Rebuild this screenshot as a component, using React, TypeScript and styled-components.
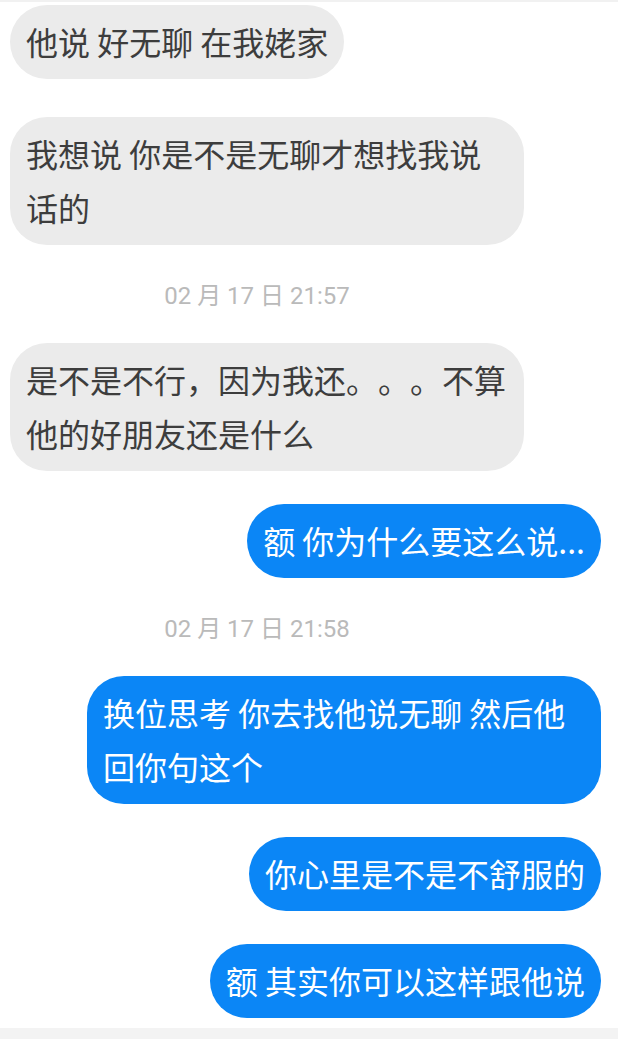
import React from "react";
import styled, { createGlobalStyle } from "styled-components";

const GlobalStyle = createGlobalStyle`
  html, body {
    margin: 0;
    padding: 0;
    background: #ffffff;
  }
  body {
    font-family: "Noto Sans CJK SC", "Noto Sans", sans-serif;
    text-spacing-trim: space-all;
  }
`;

const Screen = styled.div`
  width: 618px;
  height: 1039px;
  display: flex;
  flex-direction: column;
  overflow: hidden;
  background: #ffffff;
`;

const TopEdge = styled.div`
  height: 2px;
  flex-shrink: 0;
  background: #f1f1f1;
`;

const MessageList = styled.div`
  display: flex;
  flex-direction: column;
  padding-top: 3px;
  flex: 1;
`;

const BottomBar = styled.div`
  height: 11px;
  flex-shrink: 0;
  background: #f3f3f3;
`;

const Bubble = styled.div<{ $mine?: boolean; $space?: number }>`
  box-sizing: border-box;
  max-width: 514px;
  margin-top: ${(p) => p.$space ?? 0}px;
  padding: 9px 16px 11px;
  border-radius: 37px;
  font-size: 32px;
  line-height: 54px;
  white-space: pre-wrap;
  word-break: break-all;
  text-spacing-trim: space-all;
  align-self: ${(p) => (p.$mine ? "flex-end" : "flex-start")};
  margin-left: ${(p) => (p.$mine ? "0" : "10px")};
  margin-right: ${(p) => (p.$mine ? "17px" : "0")};
  background: ${(p) => (p.$mine ? "#0b86f6" : "#ebebeb")};
  color: ${(p) => (p.$mine ? "#ffffff" : "#3d3d3d")};
`;

const Stamp = styled.div`
  width: 514px;
  margin: 34px 0 30px;
  text-align: center;
  font-family: "Roboto", "Noto Sans CJK SC", sans-serif;
  font-size: 24px;
  line-height: 34px;
  color: #bababa;
`;

type Item =
  | { kind: "msg"; text: string; mine?: boolean; space?: number }
  | { kind: "time"; text: string };

const items: Item[] = [
  { kind: "msg", text: "他说 好无聊 在我姥家" },
  { kind: "msg", text: "我想说 你是不是无聊才想找我说话的", space: 38 },
  { kind: "time", text: "02 月 17 日 21:57" },
  { kind: "msg", text: "是不是不行，因为我还。。。不算他的好朋友还是什么" },
  { kind: "msg", text: "额 你为什么要这么说...", mine: true, space: 33 },
  { kind: "time", text: "02 月 17 日 21:58" },
  { kind: "msg", text: "换位思考 你去找他说无聊 然后他回你句这个", mine: true },
  { kind: "msg", text: "你心里是不是不舒服的", mine: true, space: 33 },
  { kind: "msg", text: "额 其实你可以这样跟他说", mine: true, space: 33 },
];

export default function App() {
  return (
    <>
      <GlobalStyle />
      <Screen>
        <TopEdge />
        <MessageList>
          {items.map((item, i) =>
            item.kind === "time" ? (
              <Stamp key={i}>{item.text}</Stamp>
            ) : (
              <Bubble key={i} $mine={item.mine} $space={item.space}>
                {item.text}
              </Bubble>
            )
          )}
        </MessageList>
        <BottomBar />
      </Screen>
    </>
  );
}
